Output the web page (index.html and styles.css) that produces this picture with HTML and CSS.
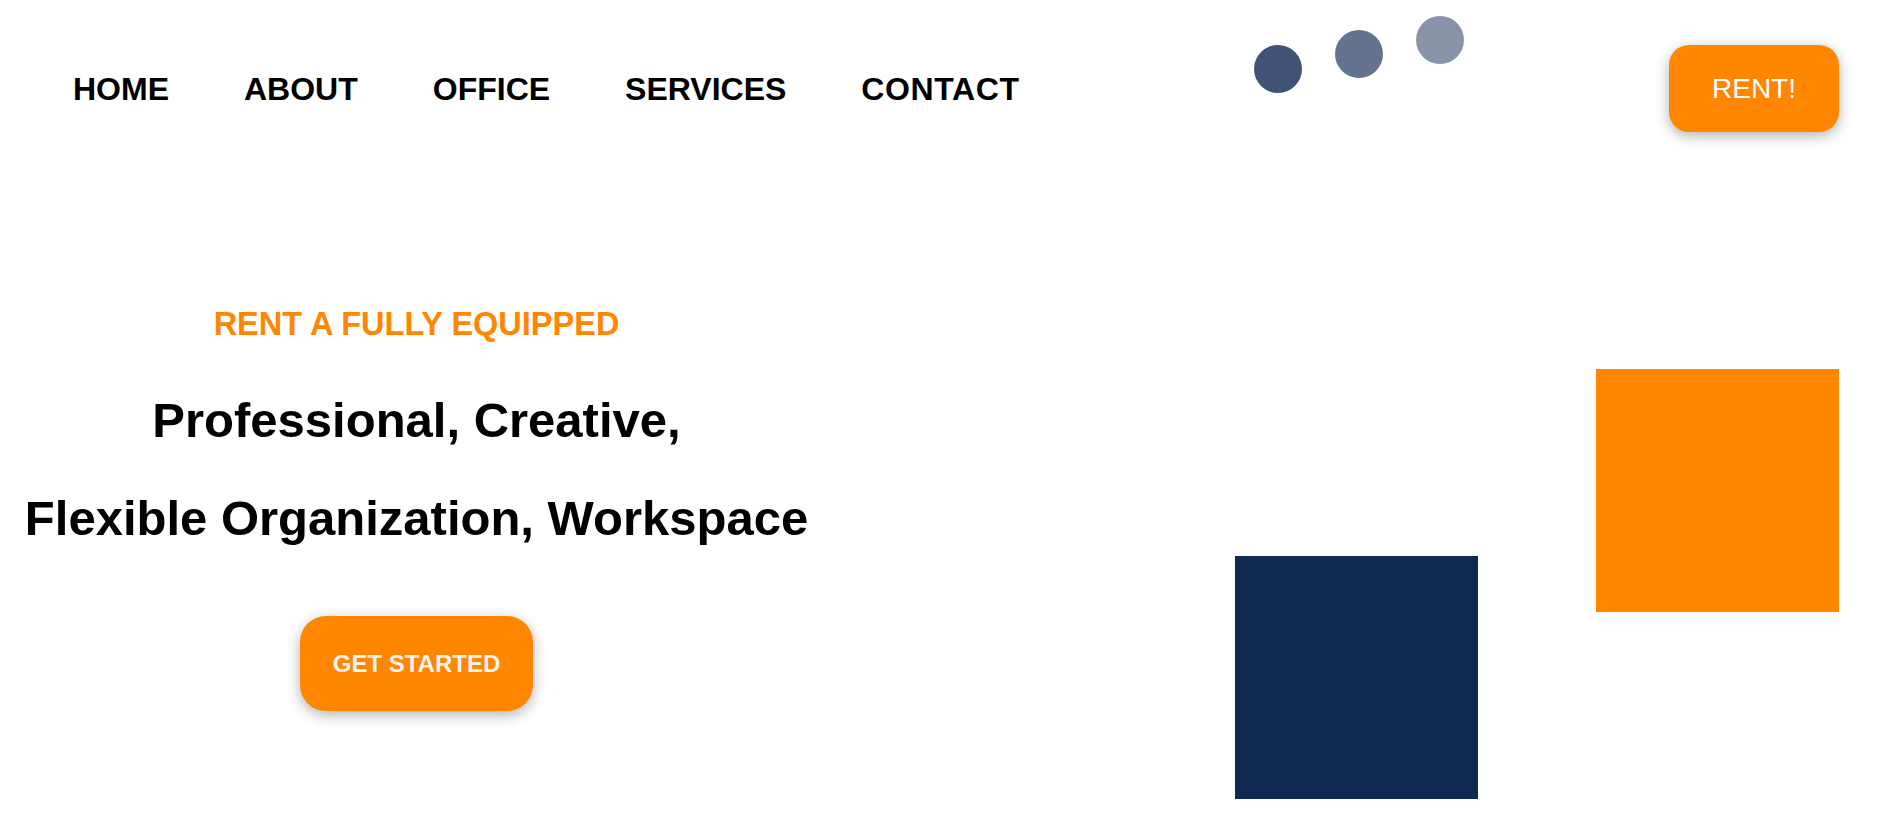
FILE: index.html
```
<!DOCTYPE html>
<html lang="en">
<head>
<meta charset="utf-8">
<title>Rent an Office</title>
<link rel="stylesheet" href="styles.css">
</head>
<body>
<header class="header">
  <nav class="nav">
    <a class="nav-link" href="#">HOME</a>
    <a class="nav-link" href="#">ABOUT</a>
    <a class="nav-link" href="#">OFFICE</a>
    <a class="nav-link" href="#">SERVICES</a>
    <a class="nav-link" href="#">CONTACT</a>
  </nav>
  <div class="dots">
    <span class="dot dot-1"></span>
    <span class="dot dot-2"></span>
    <span class="dot dot-3"></span>
  </div>
  <a class="rent-btn" href="#">RENT!</a>
</header>
<main class="hero">
  <section class="hero-text">
    <p class="eyebrow">RENT A FULLY EQUIPPED</p>
    <h1 class="title">Professional, Creative,<br>Flexible Organization, Workspace</h1>
    <a class="start-btn" href="#">GET STARTED</a>
  </section>
  <div class="shapes">
    <div class="square square-navy"></div>
    <div class="square square-orange"></div>
  </div>
</main>
</body>
</html>
```
FILE: styles.css
```
* { box-sizing: border-box; }
html, body {
  margin: 0;
  padding: 0;
  background: #ffffff;
  font-family: "Liberation Sans", Arial, sans-serif;
  overflow: hidden;
}
a { text-decoration: none; }

.header {
  display: flex;
  align-items: center;
  padding: 45px 38px 0 73px;
}
.nav {
  display: flex;
  gap: 75px;
}
.nav-link {
  color: #000;
  font-size: 32px;
  font-weight: 700;
  line-height: 36px;
}
.nav-link:last-child { letter-spacing: 0.6px; }
.dots {
  display: flex;
  align-self: flex-start;
  margin-left: 234px;
  margin-top: -29px;
  gap: 33px;
}
.dot {
  width: 48px;
  height: 48px;
  border-radius: 50%;
  background: #112852;
}
.dot-1 { opacity: 0.8; margin-top: 29px; }
.dot-2 { opacity: 0.65; margin-top: 14px; }
.dot-3 { opacity: 0.5; margin-top: 0; }

.rent-btn {
  margin-left: auto;
  width: 170px;
  height: 87px;
  display: flex;
  align-items: center;
  justify-content: center;
  background: #ff8600;
  color: #fff;
  font-size: 28px;
  font-weight: 400;
  border-radius: 20px;
  box-shadow: 0 4px 14px rgba(0, 0, 0, 0.3);
}

.hero {
  display: flex;
  align-items: flex-start;
}
.hero-text {
  width: 833px;
  flex: none;
  text-align: center;
  padding-top: 174px;
}
.eyebrow {
  margin: 0;
  color: #ff8600;
  font-size: 32.5px;
  font-weight: 700;
  line-height: 37px;
}
.title {
  margin: 28px 0 0;
  color: #000;
  font-size: 49px;
  font-weight: 700;
  line-height: 98px;
}
.start-btn {
  display: inline-flex;
  align-items: center;
  justify-content: center;
  margin-top: 49px;
  width: 233px;
  height: 95px;
  background: #ff8600;
  color: #f2f2f2;
  font-size: 24px;
  font-weight: 700;
  border-radius: 26px;
  box-shadow: 0 4px 14px rgba(0, 0, 0, 0.3);
}

.shapes {
  display: flex;
  align-items: flex-start;
  margin-left: 402px;
}
.square {
  width: 243px;
  height: 243px;
  flex: none;
}
.square-navy {
  background: #112852;
  margin-top: 424px;
}
.square-orange {
  background: #ff8600;
  margin-top: 237px;
  margin-left: 118px;
}
```
